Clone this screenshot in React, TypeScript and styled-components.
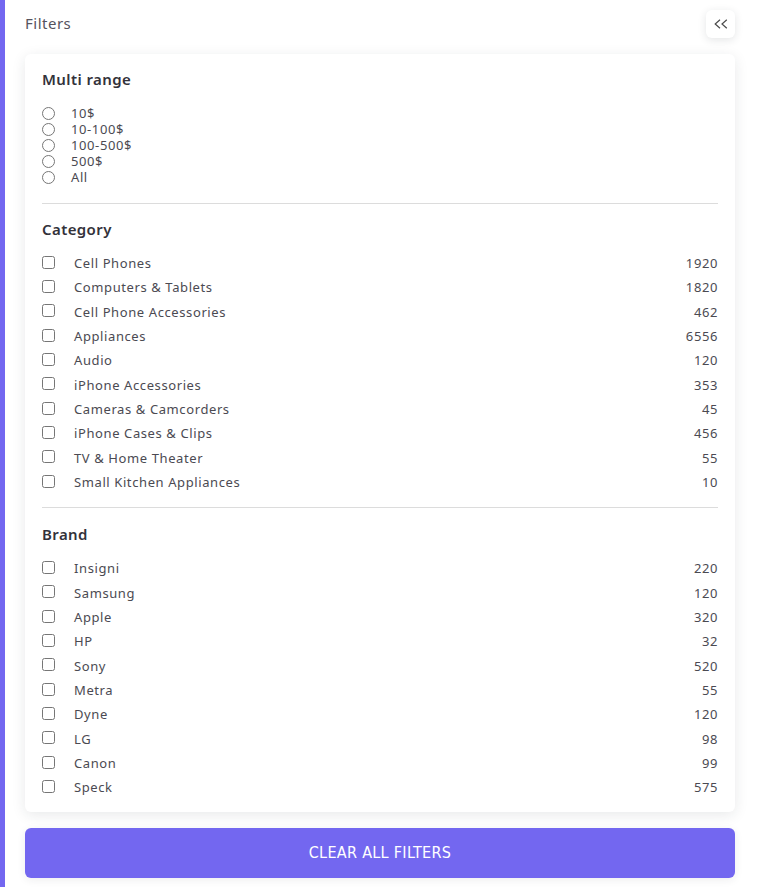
import styled, { createGlobalStyle } from "styled-components";

const GlobalStyle = createGlobalStyle`
    html, body {
        margin: 0;
        padding: 0;
        background: #ffffff;
    }
    body {
        font-family: "Noto Sans", "Open Sans", sans-serif;
    }
`

const Page = styled.div`
    min-height: 887px;
    box-sizing: border-box;
    border-left: 5px solid #7367f0;
    padding: 10px 30px 0 20px;
`

const Header = styled.div`
    display: flex;
    align-items: center;
    justify-content: space-between;
    height: 28px;
    margin-bottom: 16px;
`

const PageTitle = styled.span`
    font-size: 15px;
    line-height: 24px;
    margin-top: -2px;
    color: #55535e;
    letter-spacing: 0.5px;
`

const ToggleButton = styled.button`
    width: 29px;
    height: 28px;
    border: none;
    border-radius: 6px;
    background: #fff;
    box-shadow: 0 2px 8px rgba(34, 41, 47, 0.12);
    display: flex;
    align-items: center;
    justify-content: center;
    color: #4b4b4b;
    padding: 0;
    cursor: pointer;
`

const Card = styled.div`
    background: #fff;
    border-radius: 6px;
    box-shadow: 0 3px 14px rgba(34, 41, 47, 0.1);
    padding: 16px 17px 12px;
`

const SectionTitle = styled.h6<{ $top?: number }>`
    margin: ${p => p.$top ?? 0}px 0 0;
    font-size: 15px;
    line-height: 18px;
    font-weight: 600;
    letter-spacing: 0.4px;
    color: #33323a;
`

const Divider = styled.hr<{ $top: number }>`
    border: none;
    border-top: 1px solid #dcdcdc;
    margin: ${p => p.$top}px 0 0;
`

const RadioList = styled.div`
    margin-top: 17px;
    display: flex;
    flex-direction: column;
`

const RadioRow = styled.label`
    display: flex;
    align-items: center;
    height: 16px;
    line-height: 16px;
    font-size: 13px;
    letter-spacing: 0.6px;
    color: #4b4a52;

    input {
        width: 13px;
        height: 13px;
        margin: 0 16px 0 0;
    }
`

const CheckList = styled.div`
    margin-top: 13px;
    display: flex;
    flex-direction: column;
`

const CheckRow = styled.label`
    display: flex;
    align-items: center;
    height: 24.33px;
    line-height: 18px;
    font-size: 13px;
    letter-spacing: 0.6px;
    color: #4b4a52;

    input {
        width: 13px;
        height: 13px;
        margin: -2px 19px 0 0;
    }

    .name {
        flex: 1;
    }
`

const ClearButton = styled.button`
    display: block;
    width: 100%;
    height: 50px;
    margin-top: 16px;
    border: none;
    border-radius: 6px;
    background: #7367f0;
    color: #fff;
    font-family: "DejaVu Sans Condensed", "Roboto", sans-serif;
    font-stretch: condensed;
    font-size: 16px;
    letter-spacing: 0.3px;
    cursor: pointer;
    box-shadow: 0 2px 8px rgba(34, 41, 47, 0.08);
`

const ranges = ["10$", "10-100$", "100-500$", "500$", "All"];

const categories: [string, number][] = [
    ["Cell Phones", 1920],
    ["Computers & Tablets", 1820],
    ["Cell Phone Accessories", 462],
    ["Appliances", 6556],
    ["Audio", 120],
    ["iPhone Accessories", 353],
    ["Cameras & Camcorders", 45],
    ["iPhone Cases & Clips", 456],
    ["TV & Home Theater", 55],
    ["Small Kitchen Appliances", 10],
];

const brands: [string, number][] = [
    ["Insigni", 220],
    ["Samsung", 120],
    ["Apple", 320],
    ["HP", 32],
    ["Sony", 520],
    ["Metra", 55],
    ["Dyne", 120],
    ["LG", 98],
    ["Canon", 99],
    ["Speck", 575],
];

function CheckGroup({ items }: { items: [string, number][] }) {
    return (
        <CheckList>
            {items.map(([name, count]) => (
                <CheckRow key={name}>
                    <input type="checkbox" />
                    <span className="name">{name}</span>
                    <span>{count}</span>
                </CheckRow>
            ))}
        </CheckList>
    )
}

export default function App() {
    return (
        <>
            <GlobalStyle />
            <Page>
                <Header>
                    <PageTitle>Filters</PageTitle>
                    <ToggleButton aria-label="collapse">
                        <svg width="14" height="10" viewBox="0 0 14 10" fill="none" stroke="currentColor" strokeWidth="1.2">
                            <polyline points="6,0.8 1.2,5 6,9.2" />
                            <polyline points="12.8,0.8 8,5 12.8,9.2" />
                        </svg>
                    </ToggleButton>
                </Header>
                <Card>
                    <SectionTitle>Multi range</SectionTitle>
                    <RadioList>
                        {ranges.map(r => (
                            <RadioRow key={r}>
                                <input type="radio" name="range" />
                                {r}
                            </RadioRow>
                        ))}
                    </RadioList>
                    <Divider $top={18} />
                    <SectionTitle $top={16}>Category</SectionTitle>
                    <CheckGroup items={categories} />
                    <Divider $top={13} />
                    <SectionTitle $top={17}>Brand</SectionTitle>
                    <CheckGroup items={brands} />
                </Card>
                <ClearButton>CLEAR ALL FILTERS</ClearButton>
            </Page>
        </>
    )
}
